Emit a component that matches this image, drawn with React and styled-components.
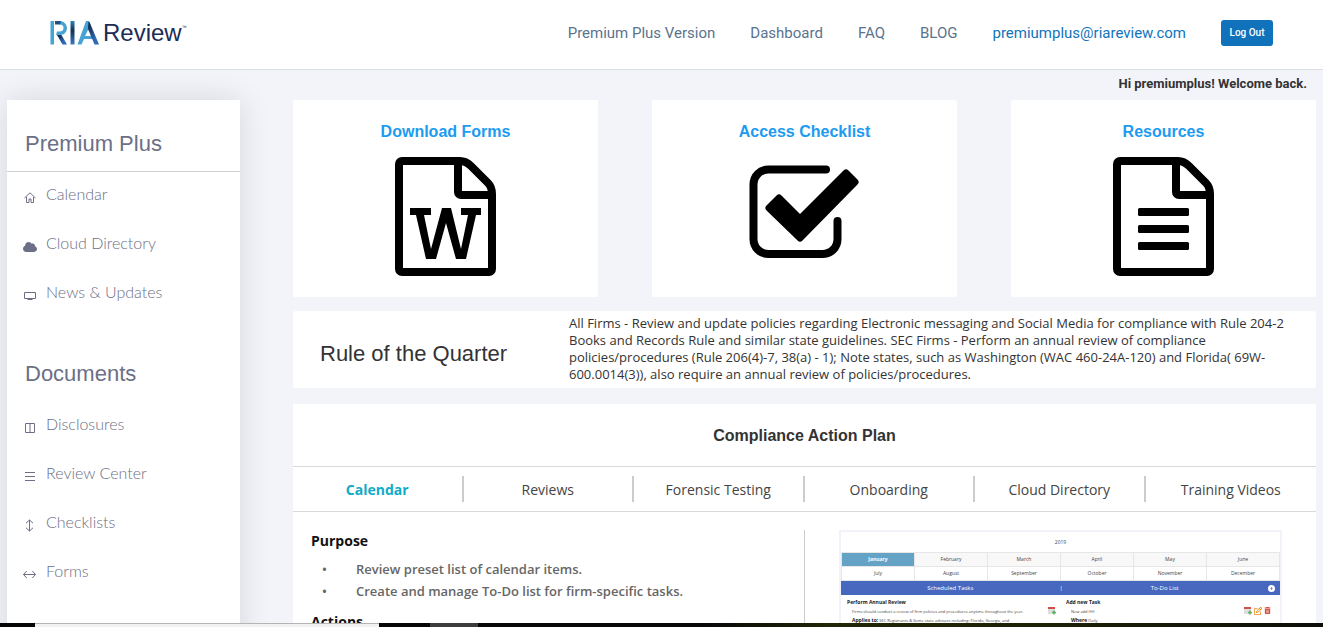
import React from "react";
import styled, { createGlobalStyle } from "styled-components";
import { FaCloud, FaCirclePlus, FaRegPenToSquare, FaTrashCan } from "react-icons/fa6";

const NAV_LINKS = ["Premium Plus Version", "Dashboard", "FAQ", "BLOG"];

const MENU = [
	{ label: "Calendar", icon: <HomeIcon /> },
	{ label: "Cloud Directory", icon: <FaCloud size={14} /> },
	{ label: "News & Updates", icon: <ScreenIcon /> },
];

const DOCUMENTS = [
	{ label: "Disclosures", icon: <ColumnsIcon /> },
	{ label: "Review Center", icon: <LinesIcon /> },
	{ label: "Checklists", icon: <ArrowIcon vertical /> },
	{ label: "Forms", icon: <ArrowIcon /> },
];

const TABS = [
	"Calendar",
	"Reviews",
	"Forensic Testing",
	"Onboarding",
	"Cloud Directory",
	"Training Videos",
];

const MONTHS = [
	["January", "February", "March", "April", "May", "June"],
	["July", "August", "September", "October", "November", "December"],
];

function App() {
	return (
		<Screen>
			<GlobalStyle />
			<Page>
				<Header>
					<Logo />
					<Nav>
						{NAV_LINKS.map((link) => (
							<NavLink href="#" key={link}>
								{link}
							</NavLink>
						))}
						<NavLink href="#" $account>
							premiumplus@riareview.com
						</NavLink>
						<LogOut type="button">Log Out</LogOut>
					</Nav>
				</Header>
				<Welcome>Hi premiumplus! Welcome back.</Welcome>
				<Body>
					<Sidebar>
						<SideTitle $ruled>Premium Plus</SideTitle>
						<SideList items={MENU} />
						<SideTitle>Documents</SideTitle>
						<SideList items={DOCUMENTS} />
					</Sidebar>
					<Content>
						<Cards>
							<Card href="#">
								<CardTitle>Download Forms</CardTitle>
								<FileIcon word />
							</Card>
							<Card href="#">
								<CardTitle>Access Checklist</CardTitle>
								<CheckIcon />
							</Card>
							<Card href="#">
								<CardTitle>Resources</CardTitle>
								<FileIcon />
							</Card>
						</Cards>
						<Rule>
							<RuleTitle>Rule of the Quarter</RuleTitle>
							<RuleText>
								All Firms - Review and update policies regarding Electronic
								messaging and Social Media for compliance with Rule 204-2 Books
								and Records Rule and similar state guidelines. SEC Firms -
								Perform an annual review of compliance policies/procedures (Rule
								206(4)-7, 38(a) - 1); Note states, such as Washington (WAC
								460-24A-120) and Florida( 69W-600.0014(3)), also require an
								annual review of policies/procedures.
							</RuleText>
						</Rule>
						<Plan>
							<PlanTitle>Compliance Action Plan</PlanTitle>
							<Tabs role="tablist">
								{TABS.map((tab, i) => (
									<Tab
										type="button"
										role="tab"
										aria-selected={i === 0}
										key={tab}
									>
										{tab}
									</Tab>
								))}
							</Tabs>
							<PlanBody>
								<Notes>
									<NotesTitle>Purpose</NotesTitle>
									<NotesList>
										<li>Review preset list of calendar items.</li>
										<li>
											Create and manage To-Do list for firm-specific tasks.
										</li>
									</NotesList>
									<NotesTitle>Actions</NotesTitle>
								</Notes>
								<Preview />
							</PlanBody>
						</Plan>
					</Content>
				</Body>
			</Page>
			<Taskbar>
				<TaskItem $width="35px" />
				<TaskItem $width="344px" $color="#f1f1f1" $line="#b4b4b4" />
				<TaskItem $width="51px" />
				<TaskItem $width="48px" $color="#3c3c3c" />
			</Taskbar>
		</Screen>
	);
}

export default App;

function SideList({ items }) {
	return (
		<SideItems>
			{items.map((item) => (
				<li key={item.label}>
					<SideLink href="#">
						<SideIcon>{item.icon}</SideIcon>
						{item.label}
					</SideLink>
				</li>
			))}
		</SideItems>
	);
}

function Preview() {
	return (
		<PreviewBox>
			<PreviewYear>2019</PreviewYear>
			<Months>
				<tbody>
					{MONTHS.map((row, i) => (
						<tr key={i}>
							{row.map((month) => (
								<Month key={month} $shaded={i === 0} $active={month === "January"}>
									{month}
								</Month>
							))}
						</tr>
					))}
				</tbody>
			</Months>
			<PreviewBar>
				<span>Scheduled Tasks</span>
				<span>|</span>
				<span>To-Do List</span>
				<FaCirclePlus size={7} />
			</PreviewBar>
			<PreviewTasks>
				<Task>
					<b>Perform Annual Review</b>
					<TaskLine>
						Firms should conduct a review of firm policies and procedures
						anytime throughout the year.
					</TaskLine>
					<TaskLine>
						<b>Applies to:</b> SEC Registrants &amp; Some state advisors
						including: Florida, Georgia, and
					</TaskLine>
				</Task>
				<TaskIcons>
					<SheetIcon />
				</TaskIcons>
				<Task>
					<b>Add new Task</b>
					<TaskLine>New add HH</TaskLine>
					<TaskLine>
						<b>Where</b> Daily
					</TaskLine>
				</Task>
				<TaskIcons>
					<SheetIcon />
					<FaRegPenToSquare size={8} color="#ea8a1f" />
					<FaTrashCan size={7} color="#d9432f" />
				</TaskIcons>
			</PreviewTasks>
		</PreviewBox>
	);
}

function Logo() {
	return (
		<LogoLink href="#" aria-label="RIA Review">
			<svg width="50" height="24" viewBox="0 0 50 24">
				<defs>
					<linearGradient id="leg" x1="0" y1="0" x2="1" y2="1">
						<stop offset="0.1" stopColor="#12284b" />
						<stop offset="0.7" stopColor="#2f6bb5" />
					</linearGradient>
					<linearGradient id="stem" x1="0" y1="0" x2="0" y2="1">
						<stop offset="0" stopColor="#2f86bd" />
						<stop offset="0.4" stopColor="#152f55" />
						<stop offset="1" stopColor="#3a7cc4" />
					</linearGradient>
				</defs>
				<path d="M0.500 0h3.500v23.500H0.500z" fill="#45a3d6" />
				<path d="M9 0c10.500 0 10.500 14 1 14H6l1-3.500h2.500c5.500 0 5.500-7 0-7z" fill="#45a3d6" />
				<path d="M5 0h6l-1 3.500H5z" fill="#1f4f80" />
				<path d="M7 14h4.500l5.500 9.500H12.500z" fill="url(#leg)" />
				<path d="M20.500 0h4v23.500h-4z" fill="url(#stem)" />
				<path d="M36 0h3l1.500 4-5.500 11h7l1 3h-9l-2.500 5.500h-4z" fill="#45a3d6" />
				<path d="M38.500 1h1L49 23.500h-4.500L38 8z" fill="url(#leg)" />
			</svg>
			<LogoText>Review</LogoText>
			<LogoMark>™</LogoMark>
		</LogoLink>
	);
}

function HomeIcon() {
	return (
		<svg width="12" height="11" viewBox="0 0 12 11" fill="none" stroke="currentColor">
			<path d="M.5 6L6 .8 11.500 6M2.500 5v5.500h2.500V7h2v3.500h2.500V5" />
		</svg>
	);
}

function ScreenIcon() {
	return (
		<svg width="12" height="8" viewBox="0 0 12 8" fill="none" stroke="currentColor">
			<path d="M.5.5h11v6H.5zM3.500 7.500h5" />
		</svg>
	);
}

function ColumnsIcon() {
	return (
		<svg width="10" height="10" viewBox="0 0 10 10" fill="none" stroke="currentColor">
			<path d="M.5.5h9v9h-9zM5 .5v9" />
		</svg>
	);
}

function LinesIcon() {
	return (
		<svg width="10" height="9" viewBox="0 0 10 9" fill="none" stroke="currentColor">
			<path d="M0 .5h10M0 4.500h10M0 8.500h10" />
		</svg>
	);
}

function ArrowIcon({ vertical }) {
	return (
		<svg width="13" height="13" viewBox="0 0 13 13" fill="none" stroke="currentColor">
			<path
				d={
					vertical
						? "M6.500 1v11M3 4.200L6.500 1 10 4.200M3 8.800L6.500 12 10 8.800"
						: "M.5 6.500h12M3.700 3L.5 6.500l3.200 3.500M9.300 3l3.200 3.500L9.300 10"
				}
			/>
		</svg>
	);
}

function FileIcon({ word }) {
	return (
		<svg width="101" height="119" viewBox="0 0 101 119">
			<path
				d="M4 7a3 3 0 0 1 3-3h58c5 0 8 2 11 5l17 17c3 3 4 6 4 11v75a3 3 0 0 1-3 3H7a3 3 0 0 1-3-3zM63 5v30a3 3 0 0 0 3 3h31"
				fill="none"
				stroke="#000"
				strokeWidth="8"
			/>
			{word ? (
				<path
					d="M15 51h21v7h-7l7 34 11-41h9l10 41 7-34h-7v-7h20v7h-5l-10 44H61L51 66 41 102H31L21 58h-6z"
					fill="#000"
				/>
			) : (
				<g fill="#000">
					<rect x="25" y="51" width="51" height="8" rx="1.500" />
					<rect x="25" y="68" width="51" height="8" rx="1.500" />
					<rect x="25" y="85" width="51" height="8" rx="1.500" />
				</g>
			)}
		</svg>
	);
}

function CheckIcon() {
	return (
		<svg width="111" height="119" viewBox="0 0 111 119">
			<path
				d="M77 12.500H19.500C11 12.500 4.500 19 4.500 27.500V82c0 8.500 6.500 15 15 15h54c8.500 0 15-6.500 15-15V64"
				fill="none"
				stroke="#000"
				strokeWidth="8"
				strokeLinecap="round"
			/>
			<path
				d="M30 41L51 62 97 16l9 9L51 81 20 51z"
				fill="#000"
				stroke="#000"
				strokeWidth="7"
				strokeLinejoin="round"
			/>
		</svg>
	);
}

function SheetIcon() {
	return (
		<svg width="8" height="8" viewBox="0 0 8 8">
			<path d="M0 2h7v5H0z" fill="#dedede" />
			<path d="M0 0h7v2H0z" fill="#d2504a" />
			<path d="M4 5.500h4M6 3.500v4" stroke="#5fae62" strokeWidth="1.500" />
		</svg>
	);
}

const GlobalStyle = createGlobalStyle`
	* {
		box-sizing: border-box;
	}

	body {
		margin: 0;
		overflow: hidden;
		background: #f3f4fa;
		color: #333;
		font-family: "Liberation Sans", Arial, sans-serif;
	}

	a {
		text-decoration: none;
	}

	button {
		border: 0;
		font-family: inherit;
		cursor: pointer;
	}
`;

const Screen = styled.div`
	height: 100vh;
	display: flex;
	flex-direction: column;
`;

const Page = styled.div`
	flex: 1;
	min-height: 0;
	overflow: hidden;
`;

const Header = styled.header`
	height: 70px;
	padding: 0 50px 4px;
	display: flex;
	align-items: center;
	justify-content: space-between;
	background: #fff;
	border-bottom: 1px solid #dcdfe6;
`;

const LogoLink = styled.a`
	display: flex;
	align-items: center;
	color: #1d2c55;
`;

const LogoText = styled.span`
	margin-left: 3px;
	font-size: 24px;
	line-height: 28px;
`;

const LogoMark = styled.span`
	align-self: flex-start;
	font-size: 5px;
	line-height: 16px;
`;

const Nav = styled.nav`
	display: flex;
	align-items: center;
	gap: 35px;
`;

const NavLink = styled.a`
	font-family: Roboto, sans-serif;
	font-size: 15px;
	color: ${(props) => (props.$account ? "#1074bc" : "#5a738e")};
`;

const LogOut = styled.button`
	min-width: 52px;
	height: 26px;
	padding: 0 8px;
	border-radius: 3px;
	background: #0f72ba;
	color: #fff;
	font-family: Roboto, sans-serif;
	font-size: 10px;
	font-weight: 500;
`;

const Welcome = styled.p`
	margin: 0;
	padding: 0 16px;
	text-align: right;
	font-family: Roboto, sans-serif;
	font-size: 13px;
	font-weight: 700;
	line-height: 28px;
`;

const Body = styled.div`
	display: flex;
	align-items: flex-start;
	gap: 53px;
	padding: 2px 7px 0;
`;

const Sidebar = styled.aside`
	flex: 0 0 233px;
	min-height: 100vh;
	background: #fff;
	box-shadow: 0 0 30px rgba(0, 0, 0, 0.12);
	color: #6c6f85;
`;

const SideTitle = styled.h2`
	margin: 0;
	padding: 28px 18px 12px;
	font-size: 22px;
	font-weight: 400;
	line-height: 31px;
	border-bottom: 1px solid ${(props) => (props.$ruled ? "#cfcfd4" : "transparent")};
`;

const SideItems = styled.ul`
	margin: 0;
	padding: 0 0 11px 16px;
	list-style: none;
`;

const SideLink = styled.a`
	height: 49px;
	padding-bottom: 6px;
	display: flex;
	align-items: center;
	gap: 10px;
	color: inherit;
	font-family: Lato, sans-serif;
	font-size: 16px;
	font-weight: 300;
`;

const SideIcon = styled.span`
	width: 13px;
	height: 20px;
	padding-top: 8px;
	display: flex;
	align-items: center;
	justify-content: center;

	svg {
		flex-shrink: 0;
	}
`;

const Content = styled.main`
	flex: 1;
	min-width: 0;
`;

const Cards = styled.div`
	display: grid;
	grid-template-columns: repeat(3, 1fr);
	gap: 54px;
`;

const Card = styled.a`
	height: 197px;
	padding-top: 21px;
	display: flex;
	flex-direction: column;
	align-items: center;
	background: #fff;
	border-radius: 2px;
`;

const CardTitle = styled.h3`
	margin: 0 0 15px;
	font-size: 16px;
	line-height: 21px;
	color: #1c9bf0;
`;

const Rule = styled.section`
	margin-top: 14px;
	padding: 4px 28px 5px 27px;
	display: flex;
	align-items: center;
	background: #fff;
	border-radius: 3px;
`;

const RuleTitle = styled.h2`
	flex: 0 0 249px;
	margin: 0;
	padding-top: 9px;
	font-size: 22px;
	font-weight: 400;
`;

const RuleText = styled.p`
	margin: 0;
	font-family: "Open Sans", sans-serif;
	font-size: 13px;
	line-height: 17px;
`;

const Plan = styled.section`
	margin-top: 16px;
	background: #fff;
`;

const PlanTitle = styled.h3`
	margin: 0;
	padding-top: 2px;
	text-align: center;
	font-size: 16px;
	line-height: 60px;
`;

const Tabs = styled.div`
	padding: 9px 0;
	display: grid;
	grid-template-columns: repeat(6, 1fr);
	border: solid #d9d9d9;
	border-width: 1px 0;
`;

const Tab = styled.button`
	height: 26px;
	padding: 0;
	background: none;
	color: #444;
	font-family: "Open Sans", sans-serif;
	font-size: 14px;

	&:not(:last-child) {
		border-right: 2px solid #ccc;
	}

	&[aria-selected="true"] {
		color: #0fabc8;
		font-weight: 700;
	}
`;

const PlanBody = styled.div`
	padding: 18px 34px 0 18px;
	display: flex;
	align-items: flex-start;
`;

const Notes = styled.div`
	flex: 1;
	min-height: 200px;
	margin-right: 34px;
	border-right: 1px solid #ccc;
	font-family: "Open Sans", sans-serif;
`;

const NotesTitle = styled.h4`
	margin: 0;
	color: #111;
	font-size: 14px;
	font-weight: 700;
	line-height: 22px;
`;

const NotesList = styled.ul`
	margin: 6px 0 9px;
	padding: 0;
	list-style: none;
	color: #666;
	font-size: 13px;
	font-weight: 600;
	line-height: 22px;

	li {
		display: flex;
	}

	li::before {
		content: "•";
		width: 34px;
		padding-left: 11px;
	}
`;

const PreviewBox = styled.div`
	flex: 0 0 443px;
	border: 2px solid #f2f3fa;
	border-bottom: 0;
	color: #444;
	font-family: "Open Sans", sans-serif;
	font-size: 5px;
	line-height: 9px;
`;

const PreviewYear = styled.div`
	text-align: center;
	line-height: 20px;
`;

const Months = styled.table`
	width: 100%;
	table-layout: fixed;
	border-collapse: collapse;
`;

const Month = styled.td`
	height: 14px;
	padding: 0;
	border: 1px solid #e6e6e6;
	text-align: center;
	background: ${(props) =>
		props.$active ? "#64a2c6" : props.$shaded ? "#f8f8f8" : "#fff"};
	color: ${(props) => (props.$active ? "#fff" : "inherit")};
	font-weight: ${(props) => (props.$active ? 700 : 400)};
`;

const PreviewBar = styled.div`
	height: 14px;
	display: grid;
	grid-template-columns: calc(50% - 1px) 2px 1fr 7px 5px;
	align-items: center;
	text-align: center;
	background: #4868bf;
	color: #fff;
	font-size: 6px;
`;

const PreviewTasks = styled.div`
	padding: 3px 6px;
	display: grid;
	grid-template-columns: 190px 29px 174px 1fr;
`;

const Task = styled.div`
	white-space: nowrap;

	b {
		color: #222;
		font-size: 5px;
	}
`;

const TaskLine = styled.div`
	height: 9px;
	padding-left: 5px;
	font-size: 4px;
`;

const TaskIcons = styled.div`
	padding-top: 9px;
	display: flex;
	align-items: flex-start;
	justify-content: center;
	gap: 2px;
`;

const Taskbar = styled.footer`
	flex: 0 0 4px;
	display: flex;
	background: linear-gradient(to right, #050708 0, #050708 700px, #202606 830px, #1c2106 80%, #0c0e08);
`;

const TaskItem = styled.div`
	width: ${(props) => props.$width};
	background: ${(props) => props.$color || "#050505"};
	border-top: 1px solid ${(props) => props.$line || "transparent"};
`;
